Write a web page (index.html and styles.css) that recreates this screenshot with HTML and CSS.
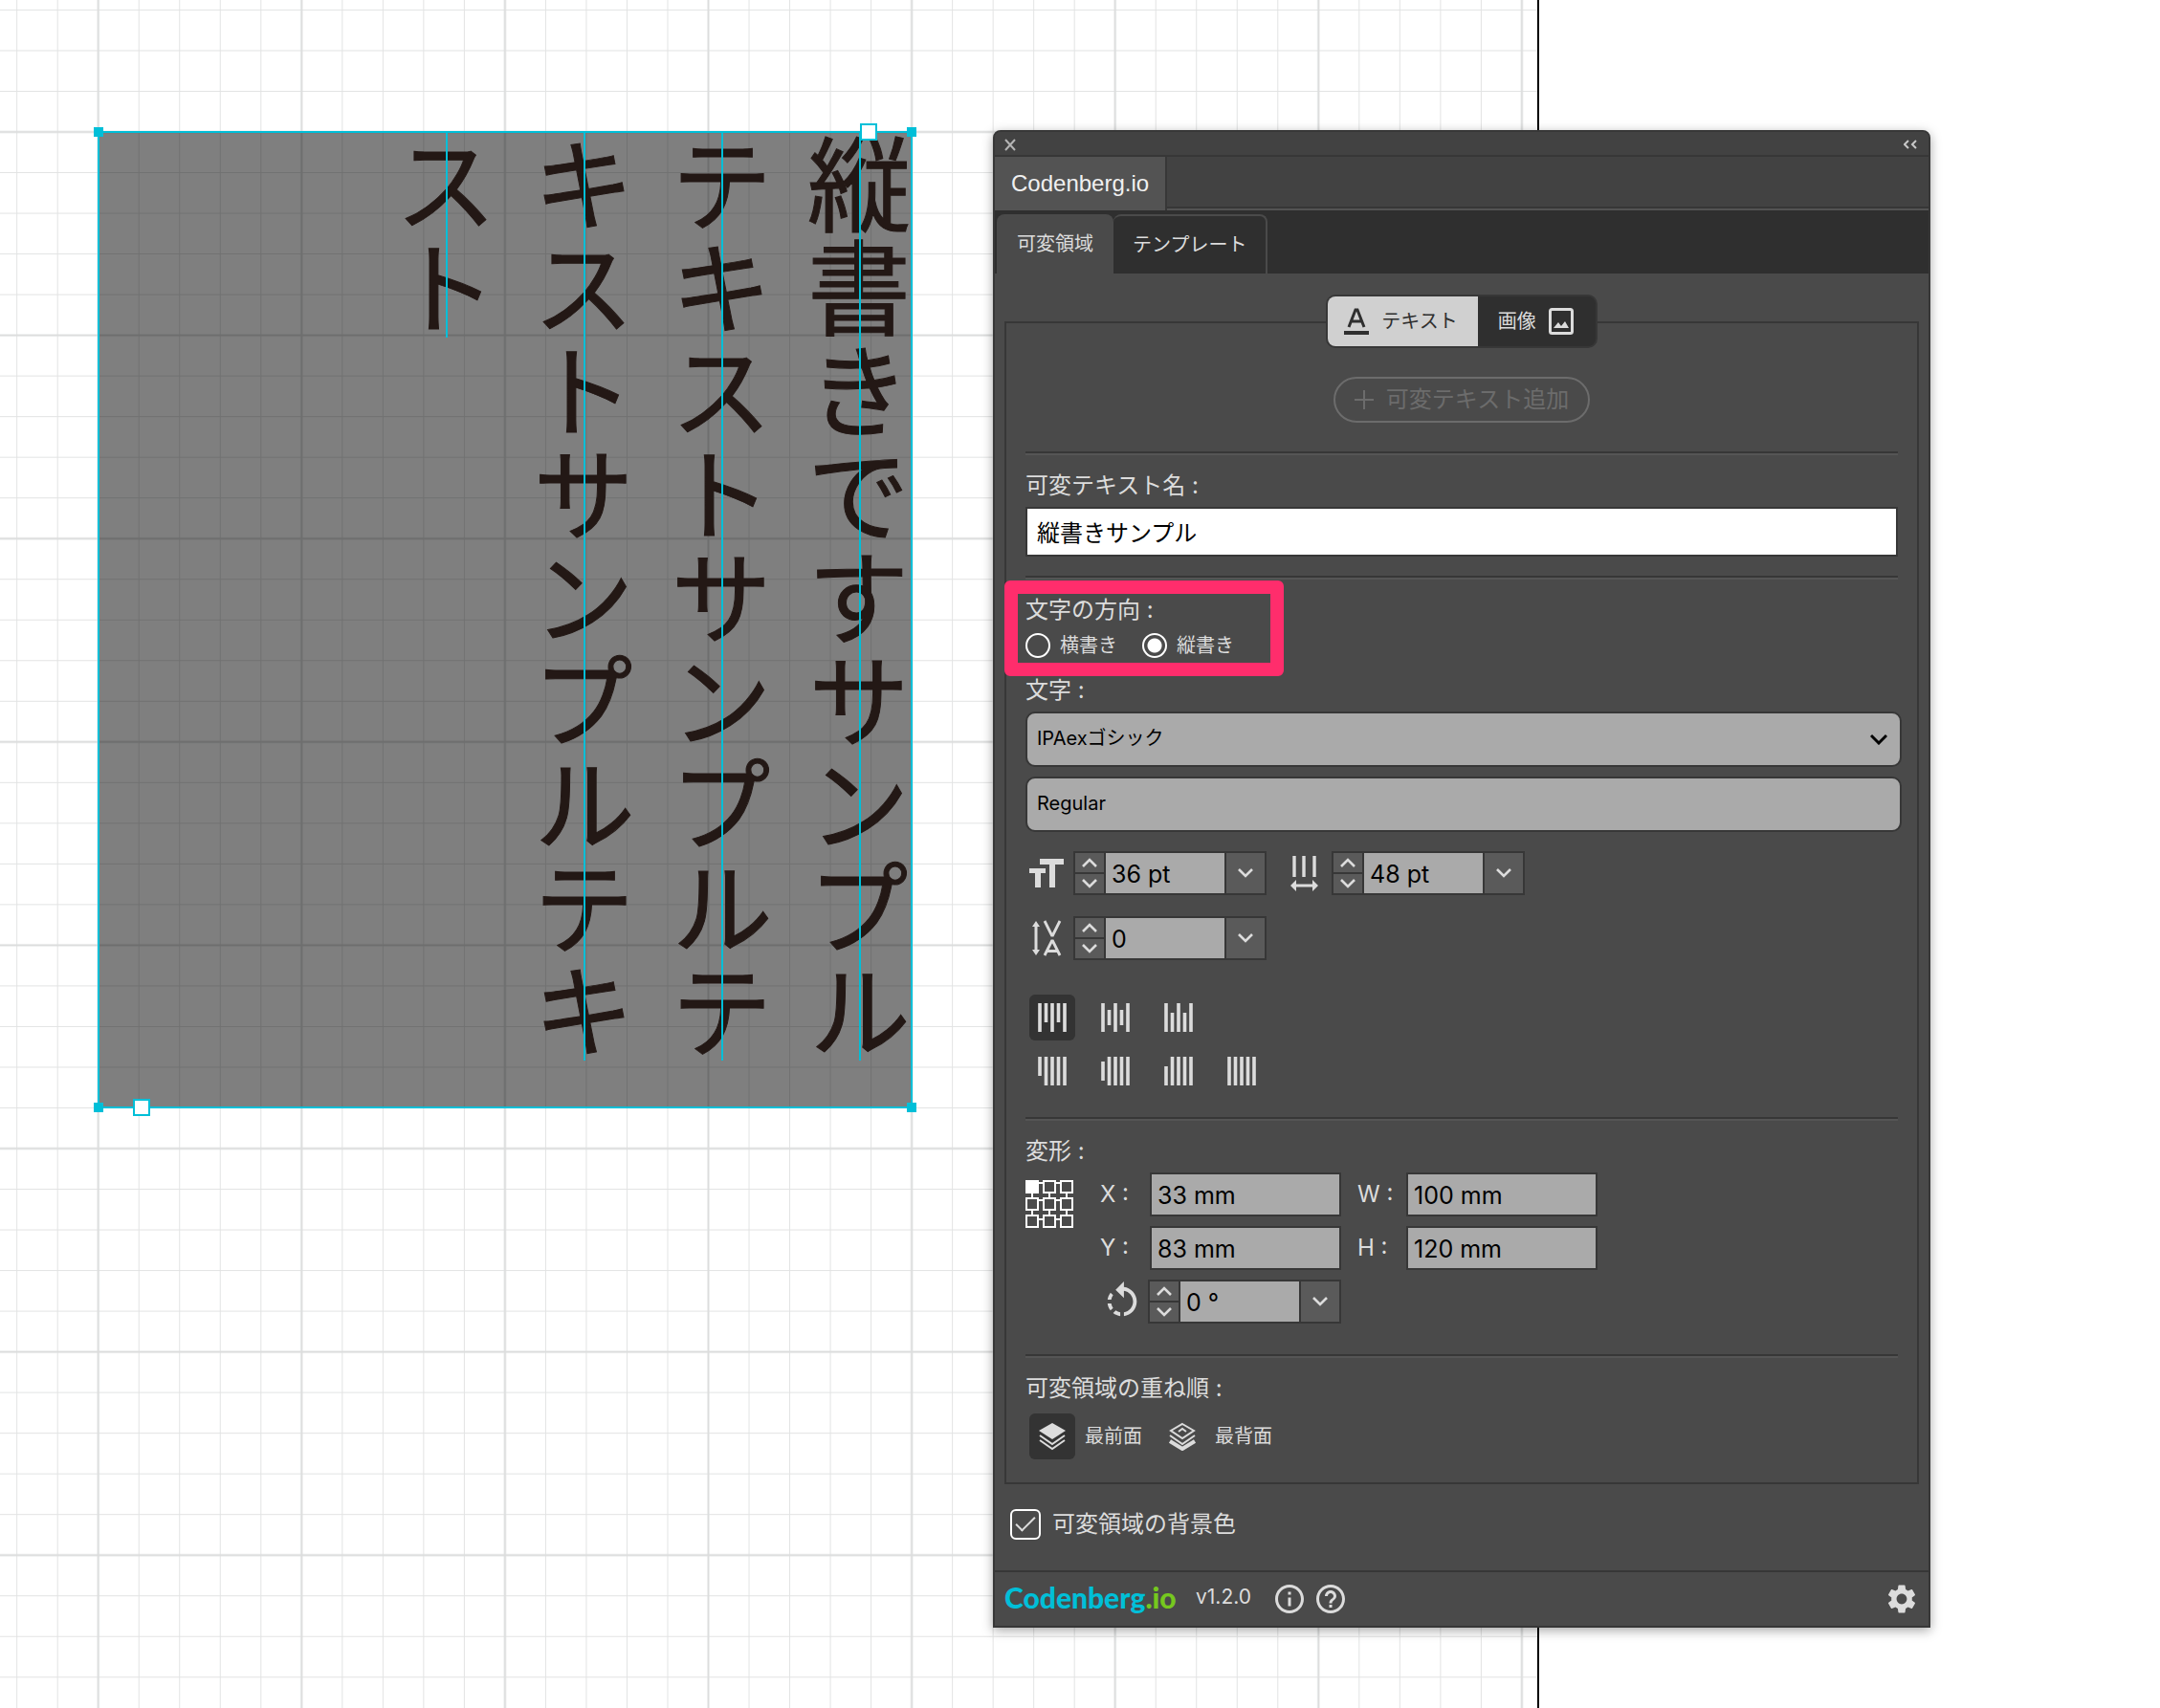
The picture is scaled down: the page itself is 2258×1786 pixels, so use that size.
FILE: index.html
```html
<!DOCTYPE html>
<html lang="ja">
<head>
<meta charset="utf-8">
<meta name="viewport" content="width=device-width, initial-scale=1">
<title>Codenberg.io</title>
<link rel="stylesheet" href="styles.css">
</head>
<body>
<svg class="sprite" aria-hidden="true">
  <symbol id="up" viewBox="0 0 16 12"><path d="M1 10 8 3l7 7" fill="none" stroke="currentColor" stroke-width="2.6"/></symbol>
  <symbol id="down" viewBox="0 0 16 12"><path d="M1 2l7 7 7-7" fill="none" stroke="currentColor" stroke-width="2.6"/></symbol>
</svg>

<div class="artboard">
  <svg class="grid" aria-hidden="true">
    <defs>
      <pattern id="minor" x="81.44" y="116.74" width="42.52" height="42.52" patternUnits="userSpaceOnUse">
        <path d="M21.26 0v42.52M0 21.26h42.52" fill="none" stroke="#e2e3e3" stroke-width="1"/>
      </pattern>
      <pattern id="major" x="-3.6" y="31.7" width="212.6" height="212.6" patternUnits="userSpaceOnUse">
        <path d="M106.3 0v212.6M0 106.3h212.6" fill="none" stroke="#dcdddd" stroke-width="2"/>
      </pattern>
    </defs>
    <rect width="100%" height="100%" fill="url(#minor)"/>
    <rect width="100%" height="100%" fill="url(#major)"/>
  </svg>
  <div class="frame">
    <p class="frame-text">縦書きですサンプルテキストサンプルテキストサンプルテキスト</p>
    <i class="baseline line-1"></i>
    <i class="baseline line-2"></i>
    <i class="baseline line-3"></i>
    <i class="baseline line-4 short"></i>
    <i class="handle top left"></i>
    <i class="handle top right"></i>
    <i class="handle bottom left"></i>
    <i class="handle bottom right"></i>
    <i class="port port-in"></i>
    <i class="port port-out"></i>
  </div>
</div>

<main class="panel">
  <header class="titlebar">
    <button class="bare" type="button" aria-label="閉じる"><svg width="12" height="13" viewBox="0 0 12 13"><path d="M1 1l10 11M11 1 1 12" stroke="#b4b4b4" stroke-width="2"/></svg></button>
    <button class="bare" type="button" aria-label="折りたたむ"><svg width="14" height="10" viewBox="0 0 14 10"><path d="M5 1 1 5l4 4M13 1 9 5l4 4" fill="none" stroke="#c8c8c8" stroke-width="2"/></svg></button>
  </header>
  <div class="dock"><h1 class="dock-tab">Codenberg.io</h1></div>
  <nav class="tabs">
    <button class="tab active" type="button">可変領域</button>
    <button class="tab" type="button">テンプレート</button>
  </nav>

  <form class="body">
    <section class="region">
      <div class="kind">
        <button class="kind-btn on" type="button">
          <svg width="26" height="28" viewBox="0 0 26 28"><path d="M5 20 12 2h2l7 18M8 14h10" fill="none" stroke="currentColor" stroke-width="3"/><path d="M0 24h26v4H0z" fill="currentColor"/></svg>
          テキスト</button>
        <button class="kind-btn" type="button">画像
          <svg width="26" height="28" viewBox="0 0 26 28"><rect x="1.5" y="1.5" width="23" height="25" rx="2" fill="none" stroke="currentColor" stroke-width="3"/><path d="M5 21l5-6 3 4 4-5 4 7z" fill="currentColor"/></svg>
        </button>
      </div>
      <button class="add" type="button" disabled>
        <svg width="20" height="20" viewBox="0 0 20 20"><path d="M10 0v20M0 10h20" stroke="currentColor" stroke-width="2"/></svg>
        可変テキスト追加</button>
      <hr>
      <label class="caption" for="name">可変テキスト名 :</label>
      <input class="name" id="name" type="text" value="縦書きサンプル">
      <hr class="near">
      <div class="direction" role="radiogroup" aria-labelledby="dir">
        <span class="caption" id="dir">文字の方向 :</span>
        <div class="radios">
          <label class="radio"><input type="radio" name="dir">横書き</label>
          <label class="radio"><input type="radio" name="dir" checked>縦書き</label>
        </div>
      </div>
      <label class="caption" for="font">文字 :</label>
      <div class="picker">
        <select id="font"><option>IPAexゴシック</option></select>
        <svg class="picker-arrow" width="18" height="12" viewBox="0 0 18 12"><path d="M1 2l8 8 8-8" fill="none" stroke="#000" stroke-width="3"/></svg>
      </div>
      <div class="picker">
        <select aria-label="スタイル"><option>Regular</option></select>
      </div>

      <div class="metrics">
        <div class="metric">
          <svg width="36" height="30" viewBox="0 0 36 30"><path d="M11 0h25v6h-9v24h-6V6H11zM0 10h17v5h-5v15H6V15H0z" fill="currentColor"/></svg>
          <div class="stepper">
            <div class="steps"><button type="button" aria-label="増やす"><svg><use href="#up"/></svg></button><button type="button" aria-label="減らす"><svg><use href="#down"/></svg></button></div>
            <input type="text" value="36 pt" aria-label="文字サイズ">
            <button type="button" aria-label="選択"><svg><use href="#down"/></svg></button>
          </div>
        </div>
        <div class="metric">
          <svg width="36" height="38" viewBox="0 0 36 38"><path d="M7 1v22M17 1v22M28 1v22" stroke="currentColor" stroke-width="3.4"/><path d="M7 32h21" stroke="currentColor" stroke-width="3"/><path d="M9 26v12l-6-6zM26 26v12l6-6z" fill="currentColor"/></svg>
          <div class="stepper">
            <div class="steps"><button type="button" aria-label="増やす"><svg><use href="#up"/></svg></button><button type="button" aria-label="減らす"><svg><use href="#down"/></svg></button></div>
            <input type="text" value="48 pt" aria-label="行送り">
            <button type="button" aria-label="選択"><svg><use href="#down"/></svg></button>
          </div>
        </div>
        <div class="metric">
          <svg width="36" height="38" viewBox="0 0 36 38"><path d="M7 5v28" stroke="currentColor" stroke-width="3"/><path d="M3 7h8L7 1zM3 31h8l-4 6z" fill="currentColor"/><path d="M16 1l7.5 15h1L32 1M16 37l7.5-15h1L32 37M19 32.5h10" fill="none" stroke="currentColor" stroke-width="2.8"/></svg>
          <div class="stepper">
            <div class="steps"><button type="button" aria-label="増やす"><svg><use href="#up"/></svg></button><button type="button" aria-label="減らす"><svg><use href="#down"/></svg></button></div>
            <input type="text" value="0" aria-label="字間">
            <button type="button" aria-label="選択"><svg><use href="#down"/></svg></button>
          </div>
        </div>
      </div>

      <div class="aligns">
        <div class="align-row">
          <button class="tool on" type="button" aria-label="上揃え"><svg viewBox="0 0 30 30"><path d="M2 0v30M8.5 0v20M15 0v30M21.5 0v20M28 0v30"/></svg></button>
          <button class="tool" type="button" aria-label="中央揃え"><svg viewBox="0 0 30 30"><path d="M2 0v30M8.5 7v16M15 0v30M21.5 7v16M28 0v30"/></svg></button>
          <button class="tool" type="button" aria-label="下揃え"><svg viewBox="0 0 30 30"><path d="M2 0v30M8.5 10v20M15 0v30M21.5 10v20M28 0v30"/></svg></button>
        </div>
        <div class="align-row">
          <button class="tool" type="button" aria-label="均等配置（最終行上揃え）"><svg viewBox="0 0 30 30"><path d="M2 0v20M8.5 0v30M15 0v30M21.5 0v30M28 0v30"/></svg></button>
          <button class="tool" type="button" aria-label="均等配置（最終行中央揃え）"><svg viewBox="0 0 30 30"><path d="M2 5v20M8.5 0v30M15 0v30M21.5 0v30M28 0v30"/></svg></button>
          <button class="tool" type="button" aria-label="均等配置（最終行下揃え）"><svg viewBox="0 0 30 30"><path d="M2 10v20M8.5 0v30M15 0v30M21.5 0v30M28 0v30"/></svg></button>
          <button class="tool" type="button" aria-label="両端揃え"><svg viewBox="0 0 30 30"><path d="M2 0v30M8.5 0v30M15 0v30M21.5 0v30M28 0v30"/></svg></button>
        </div>
      </div>
      <hr class="mid">
      <span class="caption">変形 :</span>
      <div class="transform">
        <svg class="anchor" width="50" height="50" viewBox="0 0 50 50"><g fill="none" stroke="#fff" stroke-width="2"><path d="M1 1h12v12H1z" fill="#fff"/><path d="M19 1h12v12H19zM37 1h12v12H37zM1 19h12v12H1zM19 19h12v12H19zM37 19h12v12H37zM1 37h12v12H1zM19 37h12v12H19zM37 37h12v12H37z"/><path d="M14 3h4M32 3h4M14 21h4M32 21h4M14 41h4M32 41h4M7 14v4M25 14v4M43 14v4M7 32v4M25 32v4M43 32v4"/></g></svg>
        <label class="axis" for="x">X :</label><input class="num" id="x" type="text" value="33 mm">
        <label class="axis wide" for="w">W :</label><input class="num" id="w" type="text" value="100 mm">
        <label class="axis" for="y">Y :</label><input class="num" id="y" type="text" value="83 mm">
        <label class="axis wide" for="h">H :</label><input class="num" id="h" type="text" value="120 mm">
        <svg class="rotate" width="46" height="46" viewBox="0 0 24 24"><path fill="currentColor" d="M7.11 8.53L5.7 7.11C4.8 8.27 4.24 9.61 4.07 11h2.02c.14-.87.49-1.72 1.02-2.47zM6.09 13H4.07c.17 1.39.72 2.73 1.62 3.89l1.41-1.42c-.52-.75-.87-1.59-1.01-2.47zm1.01 5.32c1.16.9 2.51 1.44 3.9 1.61V17.9c-.87-.15-1.71-.49-2.46-1.03L7.1 18.32zM13 4.07V1L8.45 5.55 13 10V6.09c2.84.48 5 2.94 5 5.91s-2.16 5.43-5 5.91v2.02c3.95-.49 7-3.85 7-7.93s-3.05-7.44-7-7.93z"/></svg>
        <div class="stepper">
          <div class="steps"><button type="button" aria-label="増やす"><svg><use href="#up"/></svg></button><button type="button" aria-label="減らす"><svg><use href="#down"/></svg></button></div>
          <input type="text" value="0 °" aria-label="回転">
          <button type="button" aria-label="選択"><svg><use href="#down"/></svg></button>
        </div>
      </div>
      <hr class="far">
      <span class="caption">可変領域の重ね順 :</span>
      <div class="layers">
        <button class="layer" type="button"><span class="tool on"><svg width="30" height="30" viewBox="0 0 30 30"><path d="M15 1l14 8-14 9L1 9z" fill="currentColor"/><path d="M2 14l13 9 13-9M2 19l13 9 13-9" fill="none" stroke="currentColor" stroke-width="2"/></svg></span>最前面</button>
        <button class="layer" type="button"><span class="tool"><svg width="30" height="30" viewBox="0 0 30 30"><path d="M15 2l12 7-12 8L3 9zM11 10l4-3 4 3M2 14l13 9 13-9" fill="none" stroke="currentColor" stroke-width="2"/><path d="M2 20l13 8 13-8" fill="none" stroke="currentColor" stroke-width="4"/></svg></span>最背面</button>
      </div>
    </section>
    <label class="check"><input type="checkbox" checked>可変領域の背景色</label>
  </form>

  <footer class="foot">
    <a class="logo" href="#">Codenberg<span>.io</span></a>
    <span class="version">v1.2.0</span>
    <button class="bare" type="button" aria-label="情報"><svg width="36" height="36" viewBox="0 0 24 24"><path fill="currentColor" d="M11 17h2v-6h-2v6zm1-15C6.48 2 2 6.48 2 12s4.48 10 10 10 10-4.48 10-10S17.52 2 12 2zm0 18c-4.41 0-8-3.59-8-8s3.59-8 8-8 8 3.59 8 8-3.59 8-8 8zM11 9h2V7h-2v2z"/></svg></button>
    <button class="bare" type="button" aria-label="ヘルプ"><svg width="36" height="36" viewBox="0 0 24 24"><path fill="currentColor" d="M11 18h2v-2h-2v2zm1-16C6.48 2 2 6.48 2 12s4.48 10 10 10 10-4.48 10-10S17.52 2 12 2zm0 18c-4.41 0-8-3.59-8-8s3.59-8 8-8 8 3.59 8 8-3.59 8-8 8zm0-14c-2.21 0-4 1.79-4 4h2c0-1.1.9-2 2-2s2 .9 2 2c0 2-3 1.75-3 5h2c0-2.25 3-2.5 3-5 0-2.21-1.79-4-4-4z"/></svg></button>
    <button class="bare gear" type="button" aria-label="設定"><svg width="36" height="36" viewBox="0 0 24 24"><path fill="currentColor" d="M19.14 12.94c.04-.3.06-.61.06-.94s-.02-.64-.07-.94l2.03-1.58c.18-.14.23-.41.12-.61l-1.92-3.32c-.12-.22-.37-.29-.59-.22l-2.39.96c-.5-.38-1.03-.7-1.62-.94l-.36-2.54c-.04-.24-.24-.41-.48-.41h-3.84c-.24 0-.43.17-.47.41l-.36 2.54c-.59.24-1.13.57-1.62.94l-2.39-.96c-.22-.08-.47 0-.59.22L2.74 8.87c-.12.21-.08.47.12.61l2.03 1.58c-.05.3-.09.63-.09.94s.02.64.07.94l-2.03 1.58c-.18.14-.23.41-.12.61l1.92 3.32c.12.22.37.29.59.22l2.39-.96c.5.38 1.03.7 1.62.94l.36 2.54c.05.24.24.41.48.41h3.84c.24 0 .44-.17.47-.41l.36-2.54c.59-.24 1.13-.56 1.62-.94l2.39.96c.22.08.47 0 .59-.22l1.92-3.32c.12-.22.07-.47-.12-.61l-2.01-1.58zM12 15.6c-1.98 0-3.6-1.62-3.6-3.6s1.62-3.6 3.6-3.6 3.6 1.62 3.6 3.6-1.62 3.6-3.6 3.6z"/></svg></button>
  </footer>
</main>
</body>
</html>
```
FILE: styles.css
```css
:root {
  --line: #373737;
  --surface: #4a4a4a;
  --text: #dcdcdc;
  --field: #aaaaaa;
  --cyan: #00bfd8;
}

*, *::before, *::after { box-sizing: border-box; }

body {
  position: relative;
  display: flow-root;
  min-height: 100vh;
  margin: 0;
  background: #fff;
  color: var(--text);
  font: 20px/32px Inter, "Noto Sans CJK JP", sans-serif;
}

button, input, select { font: inherit; color: inherit; margin: 0; }
button { padding: 0; border: 0; background: none; }
svg { display: block; flex: none; }
.sprite { position: absolute; width: 0; height: 0; }

/* Canvas */
.artboard {
  position: absolute;
  inset: 0 auto 0 0;
  width: 1609px;
  border-right: 2px solid #000;
  overflow: hidden;
}
.grid { width: 100%; height: 100%; }
.frame {
  position: absolute;
  left: 102px;
  top: 137px;
  width: 852px;
  height: 1022px;
  border: 2px solid var(--cyan);
  background: rgba(0, 0, 0, .5);
}
.frame-text {
  width: calc(100% + 18px);
  height: 100%;
  margin: 0;
  color: #231815;
  font-family: "Noto Sans CJK JP", sans-serif;
  font-size: 108px;
  line-height: 144px;
  writing-mode: vertical-rl;
  -webkit-text-stroke: 1px #231815;
}
.baseline { position: absolute; top: 0; width: 2px; height: 970px; background: var(--cyan); }
.baseline.short { height: 214px; }
.line-1 { right: 52px; }
.line-2 { right: 196px; }
.line-3 { right: 340px; }
.line-4 { right: 484px; }
.handle { position: absolute; width: 10px; height: 10px; background: var(--cyan); }
.handle.top { top: -6px; }
.handle.bottom { bottom: -6px; }
.handle.left { left: -6px; }
.handle.right { right: -6px; }
.port { position: absolute; width: 18px; height: 18px; border: 2px solid var(--cyan); background: #fff; }
.port-in { top: -10px; right: 35px; }
.port-out { bottom: -10px; left: 35px; }

/* Panel shell */
.panel {
  position: relative;
  min-width: 660px;
  margin: 136px 240px 84px 1038px;
  border: 2px solid var(--line);
  border-radius: 8px 8px 0 0;
  background: var(--surface);
  box-shadow: 0 3px 12px rgba(0, 0, 0, .35);
}
.titlebar {
  display: flex;
  align-items: center;
  justify-content: space-between;
  height: 26px;
  padding: 2px 12px 0 10px;
  border-bottom: 2px solid var(--line);
  border-radius: 6px 6px 0 0;
  background: #424242;
}
.dock {
  display: flex;
  height: 56px;
  background: linear-gradient(#424242 52px, var(--line) 52px, var(--line) 54px, #535353 54px);
}
.dock-tab {
  margin: 0;
  padding: 0 17px;
  border-right: 2px solid var(--line);
  background: #535353;
  color: #f0f0f0;
  font-family: "Liberation Sans", sans-serif;
  font-size: 24px;
  font-weight: 400;
  line-height: 56px;
}
.tabs {
  display: flex;
  height: 66px;
  padding: 4px 2px 0;
  background: #2f2f2f;
}
.tab {
  padding: 0 21px;
  border-radius: 8px 8px 0 0;
}
.tab + .tab { padding: 0 20px; border: solid var(--surface); border-width: 2px 2px 0 0; }
.tab.active { background: var(--surface); }

/* Form */
.region {
  margin: 50px 10px 0;
  padding: 0 20px 24px;
  border: 2px solid var(--line);
}
.kind {
  display: flex;
  width: fit-content;
  height: 56px;
  margin: -30px auto 0;
  border: 2px solid var(--line);
  border-radius: 10px;
  background: #2f2f2f;
  overflow: hidden;
}
.kind-btn { display: flex; align-items: center; gap: 13px; padding: 0 23px 0 21px; }
.kind-btn.on { padding: 0 21px 0 17px; background: #d0d0d0; color: #2f2f2f; }
.add {
  display: flex;
  align-items: center;
  gap: 13px;
  height: 48px;
  margin: 30px auto 0;
  padding: 0 20px;
  border: 2px solid #6c6c6c;
  border-radius: 24px;
  color: #6c6c6c;
  font-size: 24px;
}
hr {
  height: 4px;
  margin: 30px 0 16px;
  border: 0;
  background: linear-gradient(var(--line) 2px, #555 2px);
}
hr.near { margin-top: 20px; }
hr.mid { margin-top: 24px; }
hr.far { margin-top: 32px; }
.caption { display: block; margin-bottom: 6px; font-size: 24px; }
.name {
  display: block;
  width: 100%;
  height: 52px;
  padding: 0 10px 2px;
  border: 2px solid var(--line);
  background: #fff;
  color: #000;
  font-size: 24px;
}
.direction { position: relative; margin-bottom: 18px; }
.direction::after {
  content: "";
  position: absolute;
  inset: -15px auto auto -22px;
  width: 292px;
  height: 100px;
  border: 14px solid #ff2d6c;
  border-radius: 6px;
  pointer-events: none;
}
.radios { display: flex; gap: 26px; padding-top: 2px; }
.radio { display: flex; align-items: center; gap: 10px; line-height: 26px; }
.radio input {
  appearance: none;
  width: 26px;
  height: 26px;
  border: 2px solid #fff;
  border-radius: 50%;
}
.radio input:checked { background: radial-gradient(circle, #fff 7px, transparent 8px); }
.picker { position: relative; margin-right: -4px; }
.picker + .picker { margin-top: 10px; }
.picker select {
  appearance: none;
  display: block;
  width: 100%;
  height: 58px;
  padding: 0 10px 2px;
  border: 2px solid var(--line);
  border-radius: 10px;
  background: var(--field);
  color: #000;
}
.picker-arrow { position: absolute; top: 23px; right: 15px; pointer-events: none; }

.metrics {
  display: grid;
  grid-template-columns: max-content max-content;
  gap: 22px;
  margin: 20px 0 36px 4px;
}
.metric { display: flex; align-items: center; gap: 10px; }
.stepper {
  display: grid;
  grid-template-columns: 30px 124px 40px;
  gap: 2px;
  height: 46px;
  padding: 2px;
  background: var(--line);
}
.steps { display: grid; grid-template-rows: 20px 20px; gap: 2px; }
.stepper button { display: grid; place-items: center; background: #5a5a5a; }
.stepper svg { width: 16px; height: 12px; }
.stepper input, .num {
  width: 100%;
  border: 0;
  padding: 2px 6px 0;
  background: var(--field);
  color: #000;
  font-size: 25px;
}
.aligns { display: grid; gap: 8px; margin-left: 4px; }
.align-row { display: flex; gap: 18px; }
.tool { display: grid; place-items: center; width: 48px; height: 48px; border-radius: 6px; }
.tool.on { background: #333; }
.tool svg { width: 30px; height: 30px; }
.align-row path { stroke: currentColor; stroke-width: 3.6; }

.transform {
  display: grid;
  grid-template-columns: 78px 50px 202px 68px 200px;
  grid-auto-rows: 46px;
  row-gap: 10px;
  align-items: center;
}
.anchor { grid-row: 1 / 3; align-self: start; margin-top: 8px; }
.axis { font-size: 24px; }
.axis.wide { padding-left: 17px; }
.num { justify-self: end; width: 200px; height: 46px; border: 2px solid var(--line); }
.rotate { grid-column: 2; }

.layers { display: flex; gap: 18px; margin: 10px 0 0 4px; }
.layer { display: flex; align-items: center; gap: 10px; }

.check {
  display: flex;
  align-items: center;
  gap: 12px;
  width: fit-content;
  margin: 26px 16px 32px;
  font-size: 24px;
}
.check input {
  appearance: none;
  display: grid;
  place-items: center;
  width: 32px;
  height: 32px;
  border: 2px solid #fff;
  border-radius: 6px;
}
.check input::before {
  content: "";
  width: 20px;
  height: 10px;
  margin-bottom: 6px;
  border: solid var(--text);
  border-width: 0 0 2px 2px;
  transform: rotate(-45deg);
}

.foot {
  display: flex;
  align-items: center;
  height: 58px;
  padding: 0 10px;
  border-top: 2px solid var(--line);
}
.logo {
  width: 180px;
  padding-bottom: 4px;
  color: var(--cyan);
  font: 900 30px/40px Lato, sans-serif;
  text-decoration: none;
}
.logo span { color: #76c81e; }
.version { width: 80px; margin-left: 20px; padding-bottom: 4px; font-size: 21px; }
.foot .bare + .bare { margin-left: 7px; }
.foot .gear.gear { margin-left: auto; }
```
